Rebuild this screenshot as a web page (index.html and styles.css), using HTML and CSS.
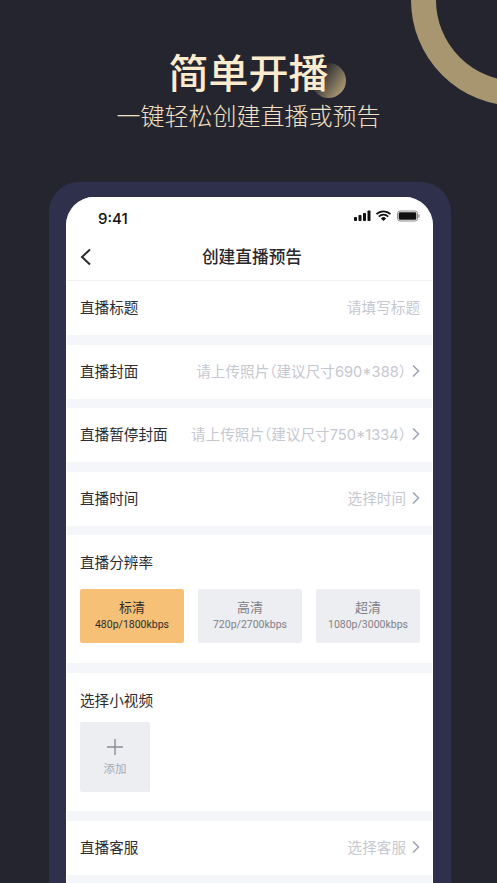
FILE: index.html
```html
<!DOCTYPE html>
<html lang="zh-CN">
<head>
    <meta charset="UTF-8">
    <meta name="viewport" content="width=device-width, initial-scale=1.0">
    <title>简单开播</title>
    <link rel="stylesheet" href="styles.css">
</head>
<body>
    <svg class="ring" width="86" height="112" viewBox="0 0 86 112"><circle cx="106" cy="0" r="93.5" fill="none" stroke="#a89670" stroke-width="25"/></svg>
    <header class="hero">
        <h1 class="hero-title"><span class="hero-dot"></span><span class="hero-text">简单开播</span></h1>
        <p class="hero-sub">一键轻松创建直播或预告</p>
    </header>
    <div class="phone">
        <div class="screen">
            <div class="status-bar">
                <span class="clock">9:41</span>
                <svg class="status-icons" width="66" height="12" viewBox="0 0 66 12">
                    <rect x="0" y="7" width="3" height="4" rx="0.8" fill="#111"/>
                    <rect x="4.5" y="5" width="3" height="6" rx="0.8" fill="#111"/>
                    <rect x="9" y="3" width="3" height="8" rx="0.8" fill="#111"/>
                    <rect x="13.5" y="0.5" width="3" height="10.5" rx="0.8" fill="#111"/>
                    <path d="M22.5 4.2a10 10 0 0 1 14 0M24.8 6.6a6.6 6.6 0 0 1 9.4 0" fill="none" stroke="#111" stroke-width="1.7"/>
                    <path d="M29.5 11l-2.6-2.6a3.7 3.7 0 0 1 5.2 0z" fill="#111"/>
                    <rect x="43.5" y="1" width="20" height="10" rx="2.5" fill="none" stroke="#888" stroke-width="1"/>
                    <rect x="44.7" y="2.2" width="17.6" height="7.6" rx="1.4" fill="#111"/>
                    <rect x="64.4" y="4.3" width="1.2" height="3.4" rx="0.6" fill="#888"/>
                </svg>
            </div>
            <nav class="nav">
                <svg class="nav-back" width="12" height="18" viewBox="0 0 12 18"><path d="M10 1.5L2 9l8 7.5" fill="none" stroke="#2b2b2f" stroke-width="2"/></svg>
                <span class="nav-title">创建直播预告</span>
            </nav>

            <div class="row">
                <span class="row-label">直播标题</span>
                <span class="row-value">请填写标题</span>
            </div>
            <div class="row">
                <span class="row-label">直播封面</span>
                <span class="row-value">请上传照片（建议尺寸690*388）</span>
                <svg class="chevron" width="8" height="14" viewBox="0 0 8 14"><path d="M1 1.5L6.5 7 1 12.5" fill="none" stroke="#9aa3b5" stroke-width="1.5"/></svg>
            </div>
            <div class="row">
                <span class="row-label">直播暂停封面</span>
                <span class="row-value">请上传照片（建议尺寸750*1334）</span>
                <svg class="chevron" width="8" height="14" viewBox="0 0 8 14"><path d="M1 1.5L6.5 7 1 12.5" fill="none" stroke="#9aa3b5" stroke-width="1.5"/></svg>
            </div>
            <div class="row">
                <span class="row-label">直播时间</span>
                <span class="row-value">选择时间</span>
                <svg class="chevron" width="8" height="14" viewBox="0 0 8 14"><path d="M1 1.5L6.5 7 1 12.5" fill="none" stroke="#9aa3b5" stroke-width="1.5"/></svg>
            </div>

            <section class="block block-res">
                <h2 class="block-title">直播分辨率</h2>
                <div class="options">
                    <div class="option option-active">
                        <span class="option-name">标清</span>
                        <span class="option-rate">480p/1800kbps</span>
                    </div>
                    <div class="option">
                        <span class="option-name">高清</span>
                        <span class="option-rate">720p/2700kbps</span>
                    </div>
                    <div class="option">
                        <span class="option-name">超清</span>
                        <span class="option-rate">1080p/3000kbps</span>
                    </div>
                </div>
            </section>

            <section class="block block-video">
                <h2 class="block-title">选择小视频</h2>
                <div class="add-box">
                    <svg width="16" height="16" viewBox="0 0 16 16"><path d="M8 0v16M0 8h16" stroke="#8c8c92" stroke-width="1.4"/></svg>
                    <span class="add-text">添加</span>
                </div>
            </section>

            <div class="row">
                <span class="row-label">直播客服</span>
                <span class="row-value">选择客服</span>
                <svg class="chevron" width="8" height="14" viewBox="0 0 8 14"><path d="M1 1.5L6.5 7 1 12.5" fill="none" stroke="#9aa3b5" stroke-width="1.5"/></svg>
            </div>
        </div>
    </div>
</body>
</html>
```

FILE: styles.css
```css
* {
    box-sizing: border-box;
}

body {
    margin: 0;
    height: 883px;
    overflow: hidden;
    position: relative;
    background: #24252f;
    font-family: Inter, "Noto Sans CJK SC", sans-serif;
}

/* decoration, top right */
.ring {
    position: absolute;
    top: 0;
    left: 411px;
}

.hero {
    height: 182px;
    padding-top: 42px;
    text-align: center;
}

.hero-title {
    position: relative;
    display: inline-block;
    margin: 0;
    font-size: 40px;
    line-height: 58px;
    font-weight: 500;
    color: #fdebcd;
    font-family: "Noto Sans CJK SC", sans-serif;
}

.hero-text {
    position: relative;
}

.hero-dot {
    position: absolute;
    top: 21px;
    right: -17px;
    width: 35px;
    height: 35px;
    border-radius: 50%;
    background: linear-gradient(125deg, rgba(168, 150, 112, 0) 25%, #a89670 85%);
}

.hero-sub {
    margin: 0;
    font-size: 24px;
    line-height: 30px;
    font-weight: 300;
    color: #f3e0c2;
    font-family: "Noto Sans CJK SC", sans-serif;
}

.phone {
    width: 402px;
    height: 720px;
    margin-left: 49px;
    padding: 15px 18px 0 17px;
    background: #2f304c;
    border-radius: 30px 30px 0 0;
}

.screen {
    height: 100%;
    background: #f5f6fa;
    border: solid #fff;
    border-width: 0 1px;
    border-radius: 28px 28px 0 0;
    overflow: hidden;
    font-family: "Noto Sans CJK SC", sans-serif;
}

.status-bar {
    height: 38px;
    padding: 5px 12px 0 31px;
    display: flex;
    justify-content: space-between;
    align-items: center;
    background: #fff;
}

.status-icons {
    margin-bottom: 6px;
}

.clock {
    font-family: Inter, sans-serif;
    font-size: 15px;
    font-weight: 500;
    color: #111;
}

.nav {
    position: relative;
    height: 46px;
    padding: 0 0 4px 5px;
    display: flex;
    align-items: center;
    justify-content: center;
    background: #fff;
    border-bottom: 1px solid #f0f0f3;
}

.nav-back {
    position: absolute;
    left: 13px;
    top: 13px;
}

.nav-title {
    font-size: 16.7px;
    font-weight: 500;
    color: #28282c;
}

.row {
    height: 54px;
    margin-bottom: 9.6px;
    padding: 0 12px 3px 13px;
    display: flex;
    align-items: center;
    background: #fff;
}

.row-label {
    font-size: 14.6px;
    color: #2c2c30;
    white-space: nowrap;
}

.row-value {
    margin-left: auto;
    font-family: Inter, "Noto Sans CJK SC", sans-serif;
    font-feature-settings: "halt";
    font-size: 14.6px;
    color: #c6c8d0;
    white-space: nowrap;
}

.chevron {
    margin: 1px 0 0 6px;
}

.block {
    margin-bottom: 9.6px;
    padding: 16px 12px 0 13px;
    background: #fff;
}

.block-res {
    height: 127.6px;
}

.block-video {
    height: 138.4px;
}

.block-title {
    margin: 0;
    font-size: 14.6px;
    line-height: 22px;
    font-weight: 400;
    color: #2c2c30;
}

.options {
    margin-top: 15.6px;
    display: flex;
    gap: 14px;
}

.option {
    width: 104px;
    height: 54px;
    display: flex;
    flex-direction: column;
    align-items: center;
    justify-content: center;
    background: #edeef2;
    border-radius: 2px;
    color: #808086;
}

.option-active {
    background: #f6c176;
    color: #2c2c30;
}

.option-name {
    margin-bottom: 2px;
    font-size: 13px;
    line-height: 16px;
}

.option-rate {
    font-family: Roboto, sans-serif;
    font-size: 10.5px;
    line-height: 16px;
}

.add-box {
    width: 70px;
    height: 70px;
    margin-top: 11.5px;
    display: flex;
    flex-direction: column;
    align-items: center;
    padding-top: 17px;
    gap: 6px;
    background: #edeef2;
    border-radius: 2px;
}

.add-text {
    font-size: 11.5px;
    line-height: 14px;
    color: #a9a9ae;
}
```
